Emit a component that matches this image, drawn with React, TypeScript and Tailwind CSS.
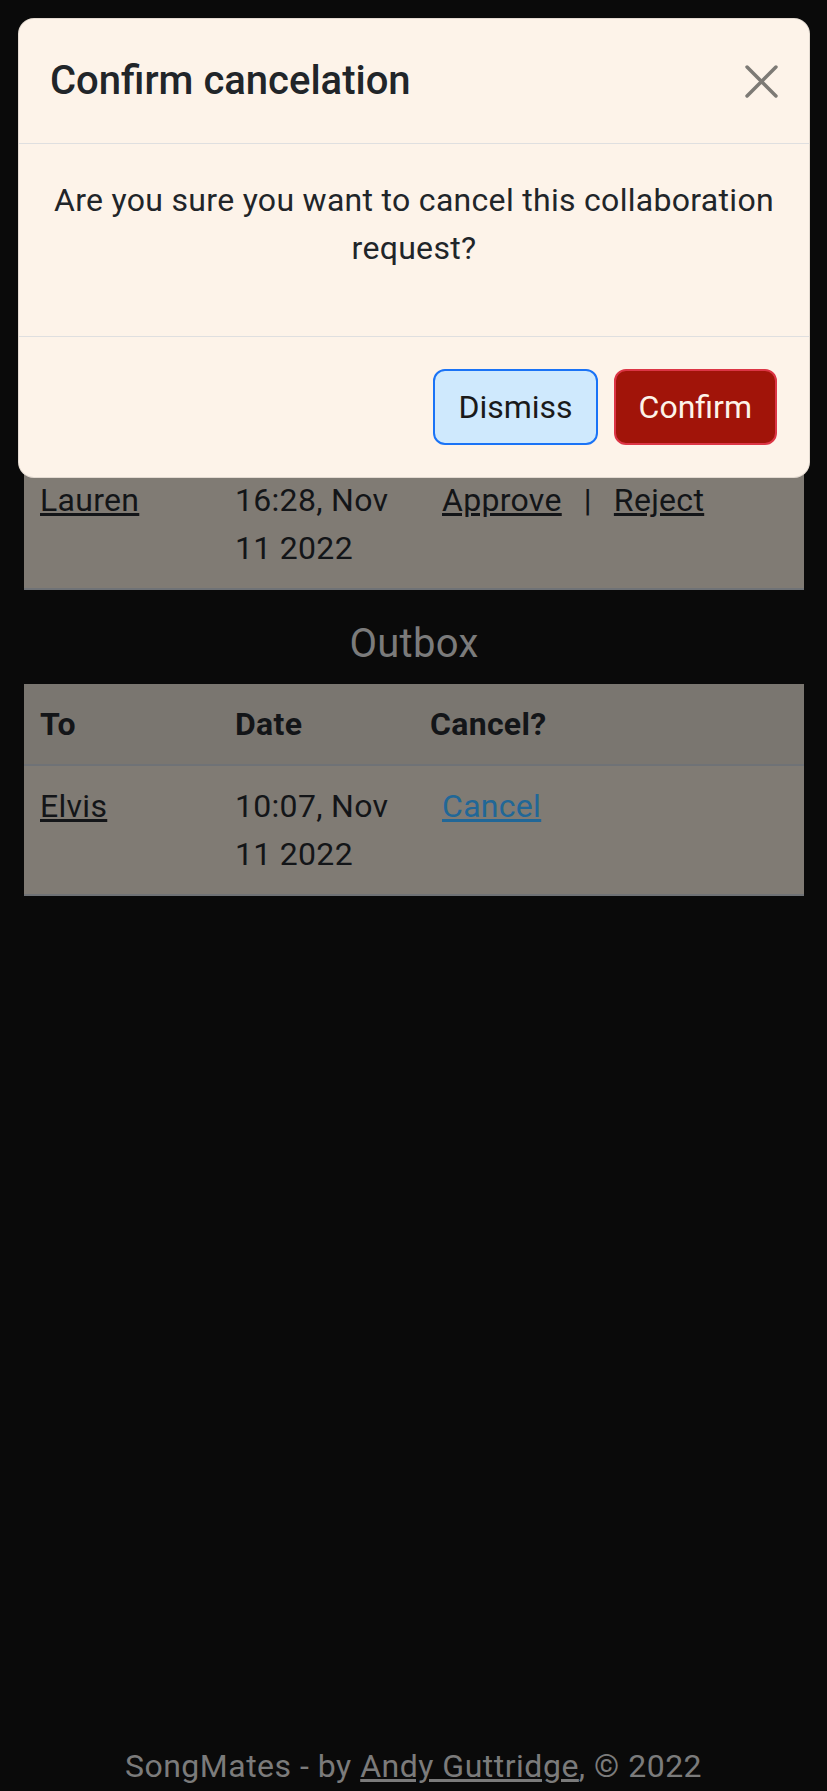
import React from 'react'

const font = { fontFamily: 'Roboto, "Noto Sans", sans-serif' }

interface RowProps {
    name: string
    date: string
    children: React.ReactNode
}

function Row({ name, date, children }: RowProps) {
    return (
        <tr className="bg-[#807b74] border-b-2 border-[#6f7276] align-top">
            <td className="px-[16px] py-[16px]">
                <a href="#" className="underline">{name}</a>
            </td>
            <td className="px-[16px] py-[16px]">{date}</td>
            <td className="px-[16px] py-[16px]">
                <div className="pl-[12px]">{children}</div>
            </td>
        </tr>
    )
}

function RequestTable({ heads, children }: { heads?: string[]; children: React.ReactNode }) {
    return (
        <table className="w-full table-fixed text-left text-[#131518]">
            <colgroup>
                <col className="w-1/4" />
                <col className="w-1/4" />
                <col className="w-1/2" />
            </colgroup>
            {heads && (
                <thead>
                    <tr className="bg-[#7a7670] border-b-2 border-[#6f7276]">
                        {heads.map((h) => (
                            <th key={h} className="px-[16px] py-[16px] font-bold">{h}</th>
                        ))}
                    </tr>
                </thead>
            )}
            <tbody>{children}</tbody>
        </table>
    )
}

export default function App() {
    return (
        <div className="relative min-h-screen bg-[#0a0a0a] flex flex-col text-[32px] leading-[48px] tracking-[0.3px]" style={font}>
            {/* inbox heading + table head sit under the modal */}
            <main className="pl-[24px] pr-[23px] pt-[460px]">
                <RequestTable>
                    <Row name="Lauren" date="16:28, Nov 11 2022">
                        <a href="#" className="underline">Approve</a>
                        <span className="px-[22px]">|</span>
                        <a href="#" className="underline">Reject</a>
                    </Row>
                </RequestTable>
                <h5 className="text-center text-[40px] leading-[48px] text-[#7b7b7b] mt-[30px] mb-[16px]">Outbox</h5>
                <RequestTable heads={['To', 'Date', 'Cancel?']}>
                    <Row name="Elvis" date="10:07, Nov 11 2022">
                        <a href="#" className="underline text-[#216797]">Cancel</a>
                    </Row>
                </RequestTable>
            </main>

            <footer className="mt-auto text-center text-[#7b7b7b] pb-[1px] tracking-[0.5px]">
                SongMates - by <a href="#" className="underline">Andy Guttridge</a>, © 2022
            </footer>

            {/* modal */}
            <div className="absolute top-[18px] left-[18px] right-[17px] bg-[#fdf3e9] rounded-[16px] border border-black/10 text-[#212529]">
                <div className="flex items-center justify-between px-[31px] py-[32px] border-b border-[#dfdfe0]">
                    <h5 className="text-[40px] leading-[60px] font-medium tracking-normal">Confirm cancelation</h5>
                    <button className="text-[#7d7a75]" aria-label="Close">
                        <svg width="33" height="33" viewBox="0 0 16 16" fill="none" stroke="currentColor" strokeWidth="1.7" strokeLinecap="round">
                            <path d="M1 1L15 15M15 1L1 15" />
                        </svg>
                    </button>
                </div>
                <div className="px-[32px] pt-[32px] pb-[32px] text-center">
                    <p className="mb-[32px]">Are you sure you want to cancel this collaboration request?</p>
                </div>
                <div className="flex justify-end gap-[16px] px-[32px] py-[32px] border-t border-[#dfdfe0] tracking-normal">
                    <button className="bg-[#cfe9fd] border-2 border-[#1a73f6] rounded-[12px] px-[23px] py-[12px] text-[#1a1a1a]">Dismiss</button>
                    <button className="bg-[#a11409] border-2 border-[#dc3545] rounded-[12px] px-[23px] py-[12px] text-[#fdf3e9]">Confirm</button>
                </div>
            </div>
        </div>
    )
}
